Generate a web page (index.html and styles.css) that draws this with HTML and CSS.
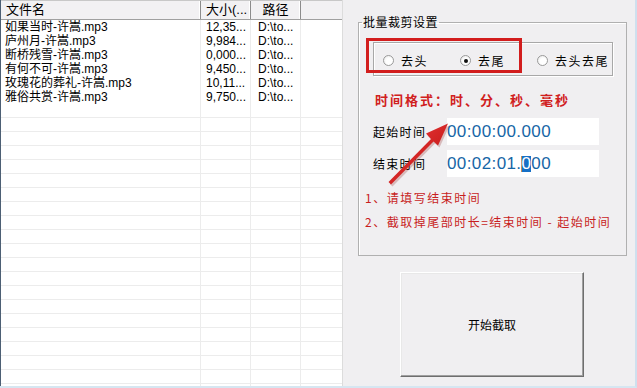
FILE: index.html
```html
<html>
<head>
	<meta http-equiv="content-type" content="text/html;charset=utf-8">
	<title>批量裁剪</title>
	<link rel="stylesheet" href="styles.css">
</head>
<body>
	<div class="app">

		<div class="list">
			<div class="head">
				<div class="hc c1">文件名</div>
				<div class="hc c2">大小(...</div>
				<div class="hc c3">路径</div>
				<div class="hc c4"></div>
			</div>
			<div class="row"><div class="c1">如果当时-许嵩.mp3</div><div class="c2">12,35...</div><div class="c3">D:\to...</div><div class="c4"></div></div>
			<div class="row"><div class="c1">庐州月-许嵩.mp3</div><div class="c2">9,984...</div><div class="c3">D:\to...</div><div class="c4"></div></div>
			<div class="row"><div class="c1">断桥残雪-许嵩.mp3</div><div class="c2">0,000...</div><div class="c3">D:\to...</div><div class="c4"></div></div>
			<div class="row"><div class="c1">有何不可-许嵩.mp3</div><div class="c2">9,450...</div><div class="c3">D:\to...</div><div class="c4"></div></div>
			<div class="row"><div class="c1">玫瑰花的葬礼-许嵩.mp3</div><div class="c2">10,11...</div><div class="c3">D:\to...</div><div class="c4"></div></div>
			<div class="row"><div class="c1">雅俗共赏-许嵩.mp3</div><div class="c2">9,750...</div><div class="c3">D:\to...</div><div class="c4"></div></div>
			<div class="filler"></div>
		</div>

		<div class="panel">
			<fieldset class="group">
				<legend>批量裁剪设置</legend>

				<div class="radios">
					<label class="radio"><span class="dot"></span>去头</label>
					<label class="radio"><span class="dot on"></span>去尾</label>
					<label class="radio last"><span class="dot"></span>去头去尾</label>
					<div class="mark"></div>
				</div>

				<p class="fmt">时间格式：时、分、秒、毫秒</p>

				<div class="field">
					<span class="lbl">起始时间</span>
					<div class="input">00:00:00.000</div>
				</div>
				<div class="field">
					<span class="lbl">结束时间</span>
					<div class="input">00:02:01.<span class="sel">0</span>00</div>
				</div>

				<p class="note">1、请填写结束时间</p>
				<p class="note">2、截取掉尾部时长=结束时间 - 起始时间</p>
			</fieldset>

			<div class="btn">开始截取</div>
		</div>

		<!-- 红色箭头 -->
		<svg class="arrow" width="637" height="388" viewBox="0 0 637 388">
			<defs>
				<linearGradient id="ag" x1="0" y1="0" x2="1" y2="1">
					<stop offset="0" stop-color="#f04040"/>
					<stop offset="1" stop-color="#b80c0c"/>
				</linearGradient>
			</defs>
			<polygon points="388.5,182 431,139 426,133.5 448,123.5 438,145.5 433.5,141.5 391,184.5" fill="#8a1a1a" opacity="0.25" transform="translate(1.5,2)"/>
			<polygon points="388.5,182 431,139 426,133.5 448,123.5 438,145.5 433.5,141.5 391,184.5" fill="url(#ag)"/>
		</svg>

	</div>
</body>
</html>
```

FILE: styles.css
```css
body{
	margin:0;
	padding:0;
	background:#f0eff1;
	font-family:"Liberation Sans","Noto Sans CJK SC",sans-serif;
}

.app{
	width:635px;
	height:386px;
	display:flex;
	position:relative;
	border-right:2px solid #cfe0ee;
	border-bottom:2px solid #d6e6f1;
	background:#f0eff1;
}

/* 文件列表 */
.list{
	width:342px;
	display:flex;
	flex-direction:column;
	background:#fff;
	border-left:1px solid #4c5f74;
	border-right:1px solid #dcdcdc;
	box-sizing:border-box;
	width:343px;
}
.head{
	height:20px;
	display:flex;
	background:#f2f1f3;
	border-top:1px solid #c8c8c8;
	border-bottom:1px solid #a0a0a0;
	box-sizing:border-box;
	font-size:13px;
	line-height:18px;
}
.hc{
	border-right:1px solid #8c8c8c;
	box-shadow:inset -1px 0 0 #fff;
	padding-left:5px;
	box-sizing:border-box;
	white-space:nowrap;
	overflow:hidden;
}
.hc.c3{
	text-align:center;
	padding-left:0;
}
.hc.c4{
	border-right:none;
	box-shadow:none;
}
.c1{ width:200px; }
.c2{ width:50px; }
.c3{ width:50px; }
.c4{ flex:1; }

.row{
	height:14px;
	display:flex;
	font-size:12px;
	line-height:14px;
	color:#000;
}
.row div{
	padding-left:4px;
	border-right:1px solid #ececec;
	box-sizing:border-box;
	white-space:nowrap;
	overflow:hidden;
}
.row .c2{ padding-left:5px; }
.row .c3{ padding-left:7px; }
.row .c4{ border-right:none; }

.filler{
	flex:1;
	background:
		linear-gradient(to right, transparent 199px, #ececec 199px, #ececec 200px, transparent 200px, transparent 249px, #ececec 249px, #ececec 250px, transparent 250px, transparent 299px, #ececec 299px, #ececec 300px, transparent 300px),
		repeating-linear-gradient(to bottom, transparent 0, transparent 13px, #ececec 13px, #ececec 14px);
}

/* 右侧设置 */
.panel{
	flex:1;
	padding:14px 0 0 15px;
}
.group{
	margin:0;
	padding:0 0 0 0;
	width:269px;
	height:242px;
	box-sizing:border-box;
	border:1px solid #b0b0b0;
	box-shadow:inset 1px 1px 0 #fff;
	font-family:"Noto Sans CJK SC",sans-serif;
}
.group legend{
	font-size:12px;
	line-height:16px;
	letter-spacing:0.5px;
	padding:0 1px;
	margin-left:3px;
	color:#000;
}

.radios{
	position:relative;
	margin:12px 0 0 14px;
	width:240px;
	height:34px;
	box-sizing:border-box;
	border:1px solid #a8a8a8;
	box-shadow:inset 1px 1px 0 #fff, 1px 1px 0 #fff;
	display:flex;
	align-items:center;
	padding:3px 0 0 9px;
}
.radio{
	width:77px;
	display:flex;
	align-items:center;
	font-size:12px;
	letter-spacing:1.5px;
	line-height:16px;
	color:#000;
}
.radio.last{ width:auto; }
.dot{
	width:11px;
	height:11px;
	border-radius:50%;
	box-sizing:border-box;
	border:1px solid #9a9a9a;
	background:radial-gradient(circle at 60% 60%, #fff 40%, #e4e4e4 100%);
	margin-right:7px;
	position:relative;
}
.dot.on:after{
	content:"";
	position:absolute;
	left:2.5px;
	top:2.5px;
	width:4px;
	height:4px;
	border-radius:50%;
	background:#111;
}
.mark{
	position:absolute;
	left:-8px;
	top:-5px;
	width:156px;
	height:35px;
	border:3px solid #d21d1d;
	box-sizing:border-box;
}

.fmt{
	margin:16px 0 0 16px;
	font-size:13px;
	font-weight:bold;
	letter-spacing:2px;
	line-height:16px;
	color:#d02020;
}

.field{
	display:flex;
	align-items:center;
	margin:10px 0 0 14px;
}
.field + .field{ margin-top:5px; }
.lbl{
	width:74px;
	font-size:12px;
	letter-spacing:1.3px;
	color:#000;
}
.input{
	width:152px;
	height:27px;
	background:#fff;
	font-family:"Liberation Sans",sans-serif;
	font-size:17px;
	letter-spacing:0.4px;
	line-height:27px;
	color:#1666a6;
}
.sel{
	display:inline-block;
	line-height:16px;
	background:#1670c6;
	color:#fff;
	border-left:1px solid #c8905a;
	margin-left:-1px;
}

.note{
	margin:13px 0 0 6px;
	font-size:12px;
	letter-spacing:1.5px;
	line-height:16px;
	color:#c81e1e;
}
.note + .note{ margin-top:8px; }

.btn{
	margin:16px 0 0 42px;
	width:184px;
	height:105px;
	box-sizing:border-box;
	border:1px solid;
	border-color:#fff #6e6e6e #6e6e6e #fff;
	box-shadow:inset -1px -1px 0 #a0a0a0, inset 1px 1px 0 #e8e8e8;
	background:#f0eff1;
	display:flex;
	align-items:center;
	justify-content:center;
	font-family:"Noto Sans CJK SC",sans-serif;
	font-size:12px;
	color:#000;
}

.arrow{
	position:absolute;
	left:0;
	top:0;
	pointer-events:none;
}
```
